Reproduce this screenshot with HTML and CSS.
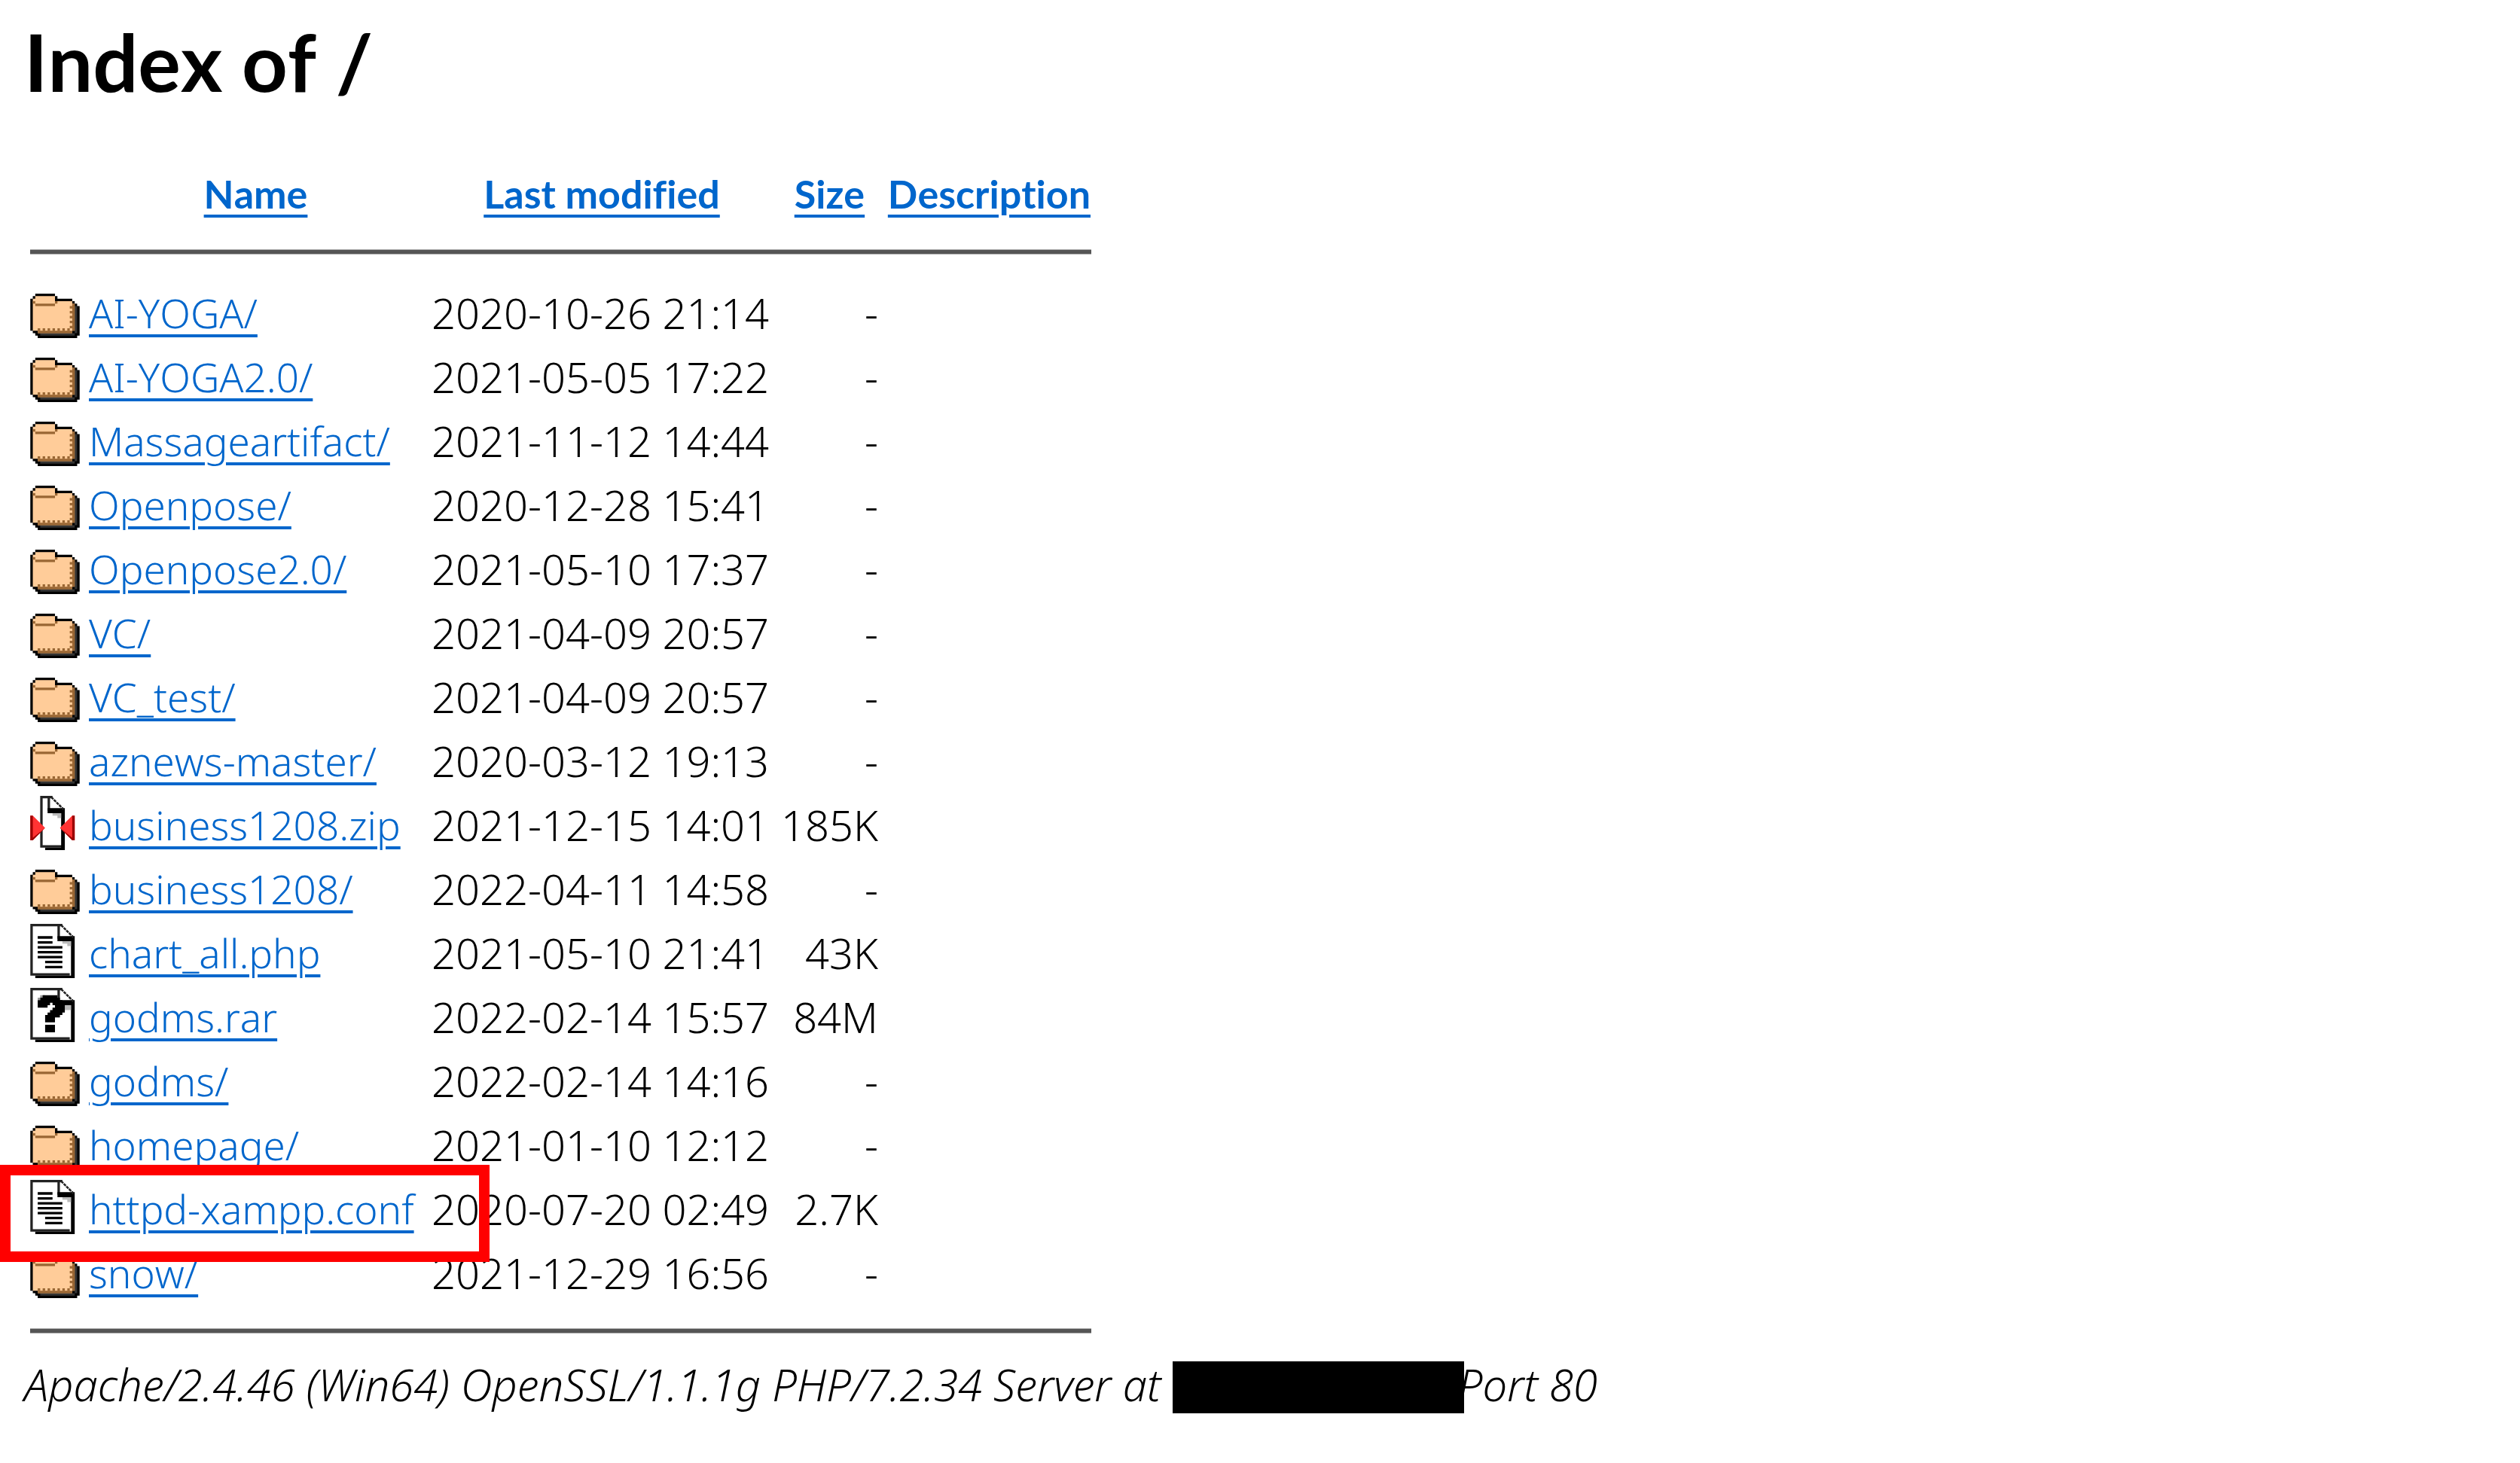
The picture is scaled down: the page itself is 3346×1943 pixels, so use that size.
FILE: index.html
```
<!DOCTYPE html>
<html>
<head>
    <meta charset="UTF-8">
    <title>Index of /</title>
    <link rel="stylesheet" href="styles.css">
</head>
<body>
    <svg class="sprites" aria-hidden="true">
        <symbol id="folder" viewBox="0 0 20 22">
            <path fill="#000" d="M2 4h8v1h1v1h6v1h1v1h1v1h1v12h-1v1H3v-1H2v-1H1v-1H0V6h1V5h1z"/>
            <path fill="#333" d="M18 9h1v11h-1v1H4v-1h14z"/>
            <path fill="#fc9" d="M2 5h8v2h7v1h1v11h-1v1H3v-1H1V6h1z"/>
            <path fill="#963" d="M2 8h8v1H2zM1 7h1v1H1zM10 7h1v1h-1zM17 8h1v11h-1v1H3v-1h14z"/>
            <path stroke="#963" stroke-dasharray="1 1" d="M3 18.5h13M16.5 9v9"/>
        </symbol>
        <symbol id="text" viewBox="0 0 20 22">
            <path fill="#fff" d="M0 0h13l5 5v17H2v-1H0z"/>
            <path fill="#222" d="M0 0h13v1H1v19h15v1H0zM11 1h1v5h-1z"/>
            <path fill="#000" d="M11 5h7v17H2v-1h14.500V7H11z"/>
            <path fill="#bbb" d="M13 7h3.500v2H15V8h-2z"/>
            <path stroke="#222" stroke-width=".8" stroke-dasharray="1.200 .3" d="M12.500 .5l5 5"/>
            <path stroke="#000" d="M3 5.500h6M3 7.500h6M3 9.500h10M3 11.500h10M3 13.500h10M6 15.500h7M6 17.500h7"/>
        </symbol>
        <symbol id="unknown" viewBox="0 0 20 22">
            <path fill="#fff" d="M0 0h13l5 5v17H2v-1H0z"/>
            <path fill="#222" d="M0 0h13v1H1v19h15v1H0zM11 1h1v5h-1z"/>
            <path fill="#000" d="M12 5h6v17H2v-1h14.500V7H12z"/>
            <path fill="#bbb" d="M14 7h2.500v2H14z"/>
            <path stroke="#222" stroke-width=".8" stroke-dasharray="1.200 .3" d="M12.500 .5l5 5"/>
            <path fill="#999" d="M4 3h2v1H4zM3 4h1v1H3z"/>
            <path fill="#000" d="M5 3h6v1h1v1h1v1h1v4h-1v1h-1v1h-2v2H6v-3h1v-1h1V9h1V8h1V7H9V6H8v1H7v1H3V5h1V4h1zM6 15h4v3H6z"/>
        </symbol>
        <symbol id="compressed" viewBox="0 0 20 22">
            <path fill="#fff" d="M4 0h5l5 5v17H6v-1H4z"/>
            <path fill="#222" d="M4 0h5v1H5v19h8v1H4zM7 1h1v5H7z"/>
            <path fill="#000" d="M7 5h7v17H6v-1h6.500V7H7z"/>
            <path fill="#bbb" d="M9 7h3.500v2H11V8H9z"/>
            <path stroke="#222" stroke-width=".8" stroke-dasharray="1.200 .3" d="M8.500 .5l5 5"/>
            <path fill="#f33" d="M0 8h1l5 5-5 5H0zM18 8h-1l-5 5 5 5h1z"/>
            <path fill="#900" d="M0 8h1v10H0zM17 8h1v10h-1zM1 17l5-4-5 5zM17 17l-5-4 5 5z"/>
        </symbol>
    </svg>

    <h1>Index of /</h1>
    <table>
        <colgroup>
            <col class="col-icon">
            <col class="col-name">
            <col class="col-date">
            <col class="col-size">
            <col class="col-desc">
        </colgroup>
        <thead>
            <tr><td></td><th><a href="?C=N;O=D">Name</a></th><th><a href="?C=M;O=A">Last modified</a></th><th><a href="?C=S;O=A">Size</a></th><th class="desc"><a href="?C=D;O=A">Description</a></th></tr>
            <tr class="rule"><td colspan="5"><hr></td></tr>
        </thead>
        <tbody>
            <tr><td><svg class="icon"><use href="#folder"/></svg></td><td><a href="AI-YOGA/">AI-YOGA/</a></td><td class="date">2020-10-26 21:14</td><td class="size">-</td><td></td></tr>
            <tr><td><svg class="icon"><use href="#folder"/></svg></td><td><a href="AI-YOGA2.0/">AI-YOGA2.0/</a></td><td class="date">2021-05-05 17:22</td><td class="size">-</td><td></td></tr>
            <tr><td><svg class="icon"><use href="#folder"/></svg></td><td><a href="Massageartifact/">Massageartifact/</a></td><td class="date">2021-11-12 14:44</td><td class="size">-</td><td></td></tr>
            <tr><td><svg class="icon"><use href="#folder"/></svg></td><td><a href="Openpose/">Openpose/</a></td><td class="date">2020-12-28 15:41</td><td class="size">-</td><td></td></tr>
            <tr><td><svg class="icon"><use href="#folder"/></svg></td><td><a href="Openpose2.0/">Openpose2.0/</a></td><td class="date">2021-05-10 17:37</td><td class="size">-</td><td></td></tr>
            <tr><td><svg class="icon"><use href="#folder"/></svg></td><td><a href="VC/">VC/</a></td><td class="date">2021-04-09 20:57</td><td class="size">-</td><td></td></tr>
            <tr><td><svg class="icon"><use href="#folder"/></svg></td><td><a href="VC_test/">VC_test/</a></td><td class="date">2021-04-09 20:57</td><td class="size">-</td><td></td></tr>
            <tr><td><svg class="icon"><use href="#folder"/></svg></td><td><a href="aznews-master/">aznews-master/</a></td><td class="date">2020-03-12 19:13</td><td class="size">-</td><td></td></tr>
            <tr><td><svg class="icon"><use href="#compressed"/></svg></td><td><a href="business1208.zip">business1208.zip</a></td><td class="date">2021-12-15 14:01</td><td class="size">185K</td><td></td></tr>
            <tr><td><svg class="icon"><use href="#folder"/></svg></td><td><a href="business1208/">business1208/</a></td><td class="date">2022-04-11 14:58</td><td class="size">-</td><td></td></tr>
            <tr><td><svg class="icon"><use href="#text"/></svg></td><td><a href="chart_all.php">chart_all.php</a></td><td class="date">2021-05-10 21:41</td><td class="size">43K</td><td></td></tr>
            <tr><td><svg class="icon"><use href="#unknown"/></svg></td><td><a href="godms.rar">godms.rar</a></td><td class="date">2022-02-14 15:57</td><td class="size">84M</td><td></td></tr>
            <tr><td><svg class="icon"><use href="#folder"/></svg></td><td><a href="godms/">godms/</a></td><td class="date">2022-02-14 14:16</td><td class="size">-</td><td></td></tr>
            <tr><td><svg class="icon"><use href="#folder"/></svg></td><td><a href="homepage/">homepage/</a></td><td class="date">2021-01-10 12:12</td><td class="size">-</td><td></td></tr>
            <tr><td class="marked"><svg class="icon"><use href="#text"/></svg><span class="marker"></span></td><td><a href="httpd-xampp.conf">httpd-xampp.conf</a></td><td class="date">2020-07-20 02:49</td><td class="size">2.7K</td><td></td></tr>
            <tr><td><svg class="icon"><use href="#folder"/></svg></td><td><a href="snow/">snow/</a></td><td class="date">2021-12-29 16:56</td><td class="size">-</td><td></td></tr>
            <tr class="rule"><td colspan="5"><hr></td></tr>
        </tbody>
    </table>
    <address>Apache/2.4.46 (Win64) OpenSSL/1.1.1g PHP/7.2.34 Server at <span class="redacted"></span>Port 80</address>
</body>
</html>
```

FILE: styles.css
```
body {
    margin: 0;
    padding: 31px 32px;
    background: #fff;
    color: #000;
    font-family: 'Noto Sans', sans-serif;
    font-size: 53px;
    font-weight: 300;
    font-kerning: none;
    line-height: 85px;
}

.sprites {
    display: none;
}

h1 {
    margin: 0 0 84px;
    font-family: Lato, sans-serif;
    font-size: 106px;
    font-weight: 700;
    line-height: 100px;
}

table {
    margin-left: 8px;
    border-collapse: collapse;
}

.col-icon {
    width: 78px;
}

.col-name {
    width: 455px;
}

.col-date {
    width: 464px;
}

.col-size {
    width: 140px;
}

.col-desc {
    width: 271px;
}

th,
td {
    height: 85px;
    padding: 0 12px 0 0;
    text-align: left;
    white-space: nowrap;
}

th {
    font-family: Lato, sans-serif;
    font-size: 52px;
    font-weight: 700;
    font-variant-ligatures: none;
    text-align: center;
}

th.desc {
    padding-right: 0;
}

a {
    color: #0066cc;
    text-decoration: underline;
    text-decoration-thickness: 4px;
    text-underline-offset: 8px;
}

.date,
.size {
    font-size: 56px;
}

.size {
    text-align: right;
}

.rule td {
    height: auto;
    padding: 31px 0 35px;
}

.rule hr {
    height: 5px;
    margin: 0;
    border: 1px solid #aaa;
    border-width: 1px 0;
    background: #555;
}

tbody .rule td {
    padding-bottom: 25px;
}

.icon {
    display: block;
    width: 66px;
    height: 72px;
    margin-bottom: 5px;
}

.marked {
    position: relative;
}

.marker {
    position: absolute;
    top: -16px;
    left: -40px;
    box-sizing: border-box;
    width: 650px;
    height: 129px;
    border: 14px solid #f00;
}

address {
    font-size: 58px;
}

.redacted {
    display: inline-block;
    width: 387px;
    height: 69px;
    margin-right: -8px;
    background: #000;
    vertical-align: -16px;
}
```
